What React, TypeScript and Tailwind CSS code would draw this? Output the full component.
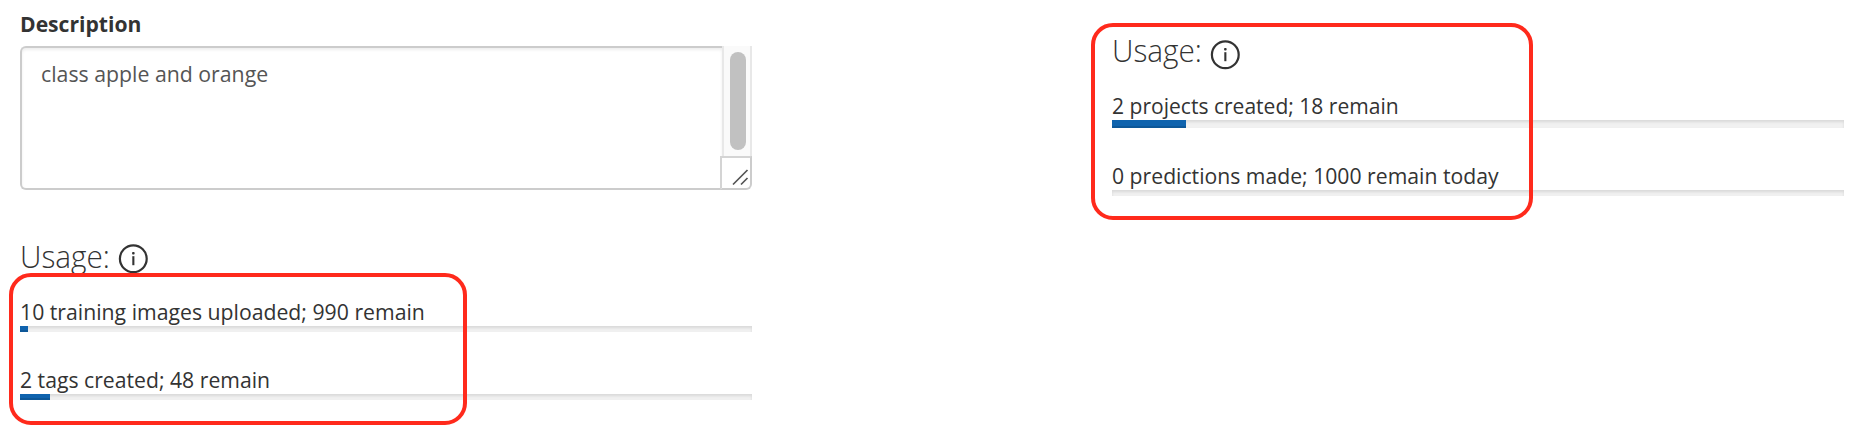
import type { ReactNode } from "react";

function InfoIcon() {
  return (
    <svg className="block size-[30px] shrink-0" viewBox="0 0 30 30" fill="none">
      <circle cx="15.3" cy="14.8" r="13.4" stroke="#333" strokeWidth="2.2" />
      <rect x="14.3" y="12.2" width="2.1" height="9" fill="#333" />
      <rect x="14.100" y="8" width="2.5" height="2.5" rx="0.8" fill="#333" />
    </svg>
  );
}

function UsageTitle({ iconOffset }: { iconOffset: string }) {
  return (
    <div className="flex h-[44px] items-start">
      <h2 className="w-[98px] text-[32px] leading-[44px] font-light whitespace-nowrap">
        <span className="inline-block origin-left scale-x-[0.93]">Usage:</span>
      </h2>
      <div className={iconOffset}>
        <InfoIcon />
      </div>
    </div>
  );
}

function Meter({ children, fill, bar }: { children: ReactNode; fill: string; bar: string }) {
  return (
    <div>
      <p className="h-[30px] text-[22px] leading-[30px] whitespace-nowrap">{children}</p>
      <div className={`w-[732px] bg-[#f1f1f1] shadow-[inset_0_2px_3px_rgba(0,0,0,0.1)] ${bar}`}>
        <div className={`h-full bg-[#0f63ae] shadow-[inset_0_-2px_0_rgba(0,0,0,0.12)] ${fill}`} />
      </div>
    </div>
  );
}

export default function App() {
  return (
    <main className="flex h-[428px] w-[1866px] items-start overflow-hidden bg-white pl-[20px] font-['Open_Sans','Noto_Sans',sans-serif] text-[#333]">
      <section className="relative w-[1092px] pt-[8px]">
        <label className="block h-[30px] text-[22px] leading-[30px] font-bold whitespace-nowrap">
          <span className="inline-block origin-left scale-x-[0.96]">Description</span>
        </label>
        <div className="mt-[8px] flex h-[144px] w-[732px]">
          <div className="w-[702px] rounded-l-[6px] border-2 border-r-0 border-[#ccc] pt-[10px] pl-[19px] text-[22px] leading-[30px] whitespace-nowrap text-[#555] shadow-[inset_0_2px_3px_rgba(0,0,0,0.07)]">
            <span className="inline-block origin-left scale-x-[0.967]">class apple and orange</span>
          </div>
          <div className="flex w-[30px] flex-col">
            <div className="h-[110px] w-[30px] border-x-2 border-[#e8e8e8] bg-[#fafafa] pt-[6px] pl-[6px]">
              <div className="h-[98px] w-[16px] rounded-full bg-[#c1c1c1]" />
            </div>
            <div className="-ml-[2px] h-[34px] w-[32px] rounded-br-[6px] border-2 border-t-[#d4d4d4] border-r-[#ccc] border-b-[#ccc] border-l-[#d4d4d4] bg-white">
              <svg className="block h-[30px] w-[28px]" viewBox="0 0 28 30" fill="none" stroke="#555" strokeWidth="1.7">
                <path d="M11 26.500 25.500 12M19 26.500 25.500 20" />
              </svg>
            </div>
          </div>
        </div>
        <div className="pt-[44px]">
          <UsageTitle iconOffset="pt-[10px]" />
          <div className="flex flex-col gap-[32px] pt-[18px]">
            <Meter bar="h-[6px]" fill="w-[8px]">
              <span className="inline-block origin-left scale-x-[0.965]">10 training images uploaded; 990 remain</span>
            </Meter>
            <Meter bar="h-[6px]" fill="w-[30px]">
              <span className="inline-block origin-left scale-x-[0.963]">2 tags created; 48 remain</span>
            </Meter>
          </div>
        </div>
        <div className="absolute top-[273px] -left-[11px] h-[152px] w-[458px] rounded-[22px] border-4 border-[#ff2a1c]" />
      </section>
      <section className="relative w-[732px] pt-[28px]">
        <UsageTitle iconOffset="pt-[12px]" />
        <div className="flex flex-col gap-[32px] pt-[18px]">
          <Meter bar="h-[8px]" fill="w-[74px]">
            <span className="inline-block origin-left scale-x-[0.957]">2 projects created; 18 remain</span>
          </Meter>
          <Meter bar="h-[6px]" fill="w-0">
            <span className="inline-block origin-left scale-x-[0.963]">0 predictions made; 1000 remain today</span>
          </Meter>
        </div>
        <div className="absolute top-[23px] -left-[21px] h-[197px] w-[442px] rounded-[22px] border-4 border-[#ff2a1c]" />
      </section>
    </main>
  );
}
